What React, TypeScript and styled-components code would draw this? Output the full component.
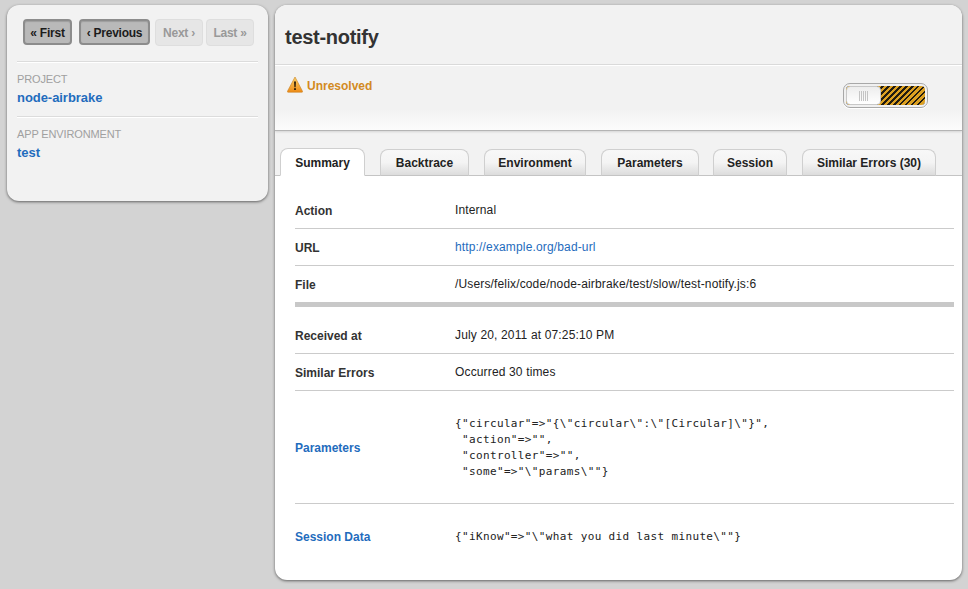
import React from "react";
import styled, { createGlobalStyle } from "styled-components";

const Global = createGlobalStyle`
  html, body { margin: 0; padding: 0; background: #d3d3d3; overflow: hidden; }
  body { font-family: "Liberation Sans", Arial, sans-serif; font-size: 12px; color: #222; }
  * { box-sizing: border-box; }
`;
const Page = styled.div`
  display: flex; align-items: flex-start; gap: 7px; width: 968px; height: 589px; padding: 5px 6px 0 7px;
`;
const Sidebar = styled.aside`
  width: 261px; height: 196px; flex: none; background: #f2f2f2; border-radius: 12px; padding: 14px 10px 0;
  box-shadow: 0 1px 3px rgba(0,0,0,.55);
`;
const Pager = styled.nav`
  display: flex; justify-content: flex-end; height: 43px; padding-right: 4px; border-bottom: 1px solid #dcdcdc;
  box-shadow: 0 1px 0 #fff;
`;
const PageButton = styled.span<{ $active?: boolean; $gap: number; $width: number }>`
  width: ${p => p.$width}px; height: ${p => (p.$active ? 26 : 27)}px; margin-left: ${p => p.$gap}px; border-radius: 4px;
  display: flex; align-items: center; justify-content: center; font-weight: bold; font-size: 12px; letter-spacing: -.25px;
  padding-top: ${p => (p.$active ? 2 : 0)}px;
  color: ${p => (p.$active ? "#1c1c1c" : "#999")};
  background: ${p => (p.$active ? "#b9b9b9" : "#e6e6e6")};
  border: ${p => (p.$active ? "2px solid #8c8c8c" : "1px solid #dedede")};
  box-shadow: ${p => (p.$active ? "inset 0 1px 1px rgba(0,0,0,.15)" : "none")};
`;
const Meta = styled.div<{ $line?: boolean }>`
  height: 55px; padding-top: 10px;
  ${p => p.$line && "border-bottom: 1px solid #dcdcdc; box-shadow: 0 1px 0 #fff;"}
`;
const MetaLabel = styled.div`
  font-size: 11px; line-height: 14px; color: #a0a0a0; letter-spacing: -.13px;
`;
const MetaValue = styled.a`
  display: block; margin-top: 4px; font-size: 13px; line-height: 16px; font-weight: bold; color: #1f6cbd; letter-spacing: -.05px;
`;
const Main = styled.main`
  width: 687px; height: 575px; flex: none; background: #fff; border-radius: 12px; overflow: hidden;
  display: flex; flex-direction: column; box-shadow: 0 1px 3px rgba(0,0,0,.55);
`;
const TitleBar = styled.header`
  height: 60px; flex: none; background: #f2f2f2; padding: 18px 10px 0; border-bottom: 1px solid #dcdcdc;
`;
const Title = styled.h1`
  margin: 0; font-size: 20px; line-height: 28px; font-weight: bold; color: #333; letter-spacing: -.28px;
`;
const StatusBar = styled.section`
  position: relative; height: 66px; flex: none; display: flex; justify-content: space-between; padding: 12px 34px 0 12px;
  border-top: 1px solid #fff; border-bottom: 1px solid #b4b4b4;
  background: linear-gradient(#f2f2f2 0, #f2f2f2 44px, #fcfcfc 100%);
  box-shadow: 0 1px 2px rgba(0,0,0,.12);
`;
const Status = styled.div`
  display: flex; align-items: flex-start; gap: 4px; font-size: 12px; line-height: 16px; font-weight: bold; color: #d28a23;
`;
const WarnIcon = styled.svg`
  width: 16px; height: 17px; flex: none; margin-top: -2px;
`;
const Toggle = styled.div`
  width: 85px; height: 25px; margin-top: 5px; padding: 2px; border: 1px solid #a8a8a8; border-radius: 7px; background: #f0f0f0;
  box-shadow: 0 1px 0 #fff;
`;
const Track = styled.div`
  height: 19px; display: flex; border-radius: 4px; overflow: hidden;
  background: repeating-linear-gradient(135deg, #221c10 0 1.9px, #dca021 1.9px 4.2px);
`;
const Knob = styled.div`
  width: 35px; display: flex; justify-content: center; align-items: center; border: 1px solid #c8c8c8; border-radius: 4px;
  background: linear-gradient(#ededed, #fff);
`;
const Grip = styled.div`
  width: 10px; height: 10px;
  background: repeating-linear-gradient(90deg, #c4c4c4 0 1px, transparent 1px 2px);
`;
const TabBar = styled.nav`
  height: 45px; flex: none; display: flex; align-items: flex-end; background: #f2f2f2; border-bottom: 1px solid #c4c4c4;
  padding-left: 5px;
`;
const Tab = styled.span<{ $active?: boolean; $width: number; $gap: number }>`
  width: ${p => p.$width}px; margin-left: ${p => p.$gap}px; height: ${p => (p.$active ? 28 : 27)}px;
  margin-bottom: -1px; display: flex; justify-content: center; align-items: center; padding-top: 1px;
  font-size: 12px; font-weight: bold; color: #222;
  border: 1px solid #cfcfcf; border-radius: 8px 8px 0 0;
  ${p => (p.$active
    ? "background: #fff; border-bottom: 1px solid #fff;"
    : "background: linear-gradient(#f8f8f8 0, #f4f4f4 50%, #dcdcdc 100%); border-bottom: 1px solid #c4c4c4;")}
`;
const Body = styled.div`
  padding: 16px 8px 0 20px;
`;
const Row = styled.div<{ $height?: number; $none?: boolean }>`
  display: grid; grid-template-columns: 160px 1fr; align-items: center; height: ${p => p.$height ?? 37}px;
  ${p => !p.$none && "border-bottom: 1px solid #cbcbcb;"}
`;
const Label = styled.div<{ $link?: boolean }>`
  font-weight: bold; font-size: 12px; padding-top: 2px; color: ${p => (p.$link ? "#1f6cbd" : "#333")};
`;
const Value = styled.div`
  font-size: 12px; color: #222; letter-spacing: .15px;
`;
const Link = styled.a`
  color: #1f6cbd;
`;
const Divider = styled.div`
  height: 5px; margin-bottom: 10px; background: #c8c8c8; margin-top: -1px;
`;
const Code = styled.pre`
  margin: 0; padding-top: 2px; font-family: "DejaVu Sans Mono", "Liberation Mono", monospace; font-size: 11px; line-height: 16px;
  letter-spacing: .36px; color: #222;
`;

const pages = [
  { label: "« First", width: 49, gap: 0, active: true },
  { label: "‹ Previous", width: 71, gap: 7, active: true },
  { label: "Next ›", width: 48, gap: 5 },
  { label: "Last »", width: 48, gap: 3 },
];

const tabs = [
  { label: "Summary", width: 85, gap: 0, active: true },
  { label: "Backtrace", width: 89, gap: 15 },
  { label: "Environment", width: 102, gap: 15 },
  { label: "Parameters", width: 98, gap: 15 },
  { label: "Session", width: 74, gap: 14 },
  { label: "Similar Errors (30)", width: 134, gap: 15 },
];

export default function App() {
  return (
    <Page>
      <Global />
      <Sidebar>
        <Pager>
          {pages.map(p => (
            <PageButton key={p.label} $active={p.active} $gap={p.gap} $width={p.width}>{p.label}</PageButton>
          ))}
        </Pager>
        <Meta $line>
          <MetaLabel>PROJECT</MetaLabel>
          <MetaValue>node-airbrake</MetaValue>
        </Meta>
        <Meta>
          <MetaLabel>APP ENVIRONMENT</MetaLabel>
          <MetaValue>test</MetaValue>
        </Meta>
      </Sidebar>
      <Main>
        <TitleBar><Title>test-notify</Title></TitleBar>
        <StatusBar>
          <Status>
            <WarnIcon viewBox="0 0 16 17">
              <defs>
                <linearGradient id="warn" x1="0" y1="0" x2="0" y2="1">
                  <stop offset="0" stopColor="#fbd36a" />
                  <stop offset="1" stopColor="#ee8a14" />
                </linearGradient>
              </defs>
              <path d="M8 1 L15.6 15.4 Q15.8 16.2 15 16.2 H1 Q.2 16.2 .4 15.4 Z" fill="url(#warn)" stroke="#c9801e" strokeWidth=".6" />
              <path d="M7 5.5 H9 L8.6 11.2 H7.4 Z" fill="#2a1c08" />
              <rect x="7.1" y="12.2" width="1.8" height="1.8" fill="#2a1c08" />
            </WarnIcon>
            Unresolved
          </Status>
          <Toggle>
            <Track>
              <Knob><Grip /></Knob>
            </Track>
          </Toggle>
        </StatusBar>
        <TabBar>
          {tabs.map(t => (
            <Tab key={t.label} $active={t.active} $width={t.width} $gap={t.gap}>{t.label}</Tab>
          ))}
        </TabBar>
        <Body>
          <Row><Label>Action</Label><Value>Internal</Value></Row>
          <Row><Label>URL</Label><Value><Link>http://example.org/bad-url</Link></Value></Row>
          <Row><Label>File</Label><Value>/Users/felix/code/node-airbrake/test/slow/test-notify.js:6</Value></Row>
          <Divider />
          <Row><Label>Received at</Label><Value>July 20, 2011 at 07:25:10 PM</Value></Row>
          <Row><Label>Similar Errors</Label><Value>Occurred 30 times</Value></Row>
          <Row $height={113}>
            <Label $link>Parameters</Label>
            <Code>{`{"circular"=>"{\\"circular\\":\\"[Circular]\\"}",
 "action"=>"",
 "controller"=>"",
 "some"=>"\\"params\\""}`}</Code>
          </Row>
          <Row $height={64} $none>
            <Label $link>Session Data</Label>
            <Code>{`{"iKnow"=>"\\"what you did last minute\\""}`}</Code>
          </Row>
        </Body>
      </Main>
    </Page>
  );
}
